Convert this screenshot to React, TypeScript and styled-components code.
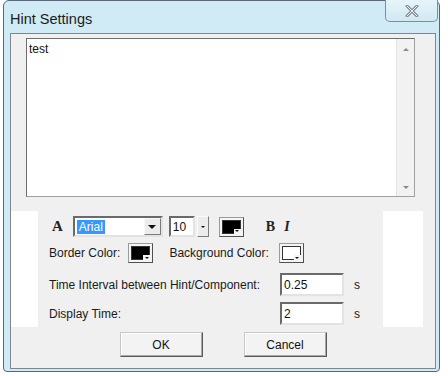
import styled, { createGlobalStyle } from 'styled-components';

const GlobalStyle = createGlobalStyle`
  body {
    margin: 0;
    background: #ffffff;
    font-family: "Liberation Sans", Arial, sans-serif;
  }
`;

const Window = styled.div`
  margin-left: 3px;
  width: 437px;
  height: 372px;
  box-sizing: border-box;
  border: 1px solid #56687a;
  border-radius: 6px 6px 4px 4px;
  background: #d0ebf6;
  display: flex;
  flex-direction: column;
`;

const TitleBar = styled.div`
  height: 32px;
  display: flex;
  align-items: flex-start;
  padding: 0 1px 0 6px;
`;

const Title = styled.div`
  font-size: 14.5px;
  line-height: 16px;
  margin-top: 10px;
  color: #1b1b1b;
`;

const CloseButton = styled.div`
  margin-left: auto;
  margin-top: -1px;
  width: 53px;
  height: 22px;
  box-sizing: border-box;
  border: 1px solid #7b8e9c;
  border-top: none;
  border-radius: 0 0 5px 5px;
  background: linear-gradient(#e6f4fa, #d2e8f2);
  display: flex;
  align-items: center;
  justify-content: center;
`;

const Client = styled.div`
  margin: 0 3px 2px 6px;
  width: 426px;
  height: 336px;
  box-sizing: border-box;
  border: 1px solid #7c878f;
  background: #f0f0f0;
  display: flex;
  flex-direction: column;
`;

const TextBox = styled.div`
  margin: 4px 0 0 15px;
  width: 389px;
  height: 159px;
  box-sizing: border-box;
  border: 1px solid #a0a0a0;
  border-top-color: #6d6d6d;
  border-left-color: #6d6d6d;
  background: #ffffff;
  display: flex;
`;

const TextArea = styled.div`
  flex: 1;
  padding: 3px 2px;
  font-size: 12px;
  line-height: 14px;
  color: #111;
`;

const ScrollBar = styled.div`
  width: 17px;
  border-left: 1px solid #e4e4e4;
  background: #f2f2f2;
  display: flex;
  flex-direction: column;
  justify-content: space-between;
  align-items: center;
  padding: 9px 0 7px;
`;

const Arrow = styled.div<{ $down?: boolean; $size?: number; $color?: string }>`
  width: 0;
  height: 0;
  border-left: ${({ $size = 3 }) => $size}px solid transparent;
  border-right: ${({ $size = 3 }) => $size}px solid transparent;
  ${({ $down, $size = 3, $color = '#8a8a8a' }) =>
    $down
      ? `border-top: ${$size}px solid ${$color};`
      : `border-bottom: ${$size}px solid ${$color};`}
`;

const LowerArea = styled.div`
  margin-top: 14px;
  width: 412px;
  height: 116px;
  background: #ffffff;
  display: flex;
`;

const Panel = styled.div`
  margin-left: 27px;
  width: 345px;
  background: #f0f0f0;
  padding-top: 5px;
  box-sizing: border-box;
  font-size: 12px;
  color: #1a1a1a;
`;

const Row = styled.div<{ $mt?: number; $h: number }>`
  display: flex;
  align-items: center;
  height: ${({ $h }) => $h}px;
  margin-top: ${({ $mt = 0 }) => $mt}px;
`;

const Item = styled.div<{ $ml: number }>`
  margin-left: ${({ $ml }) => $ml}px;
  display: flex;
  align-items: center;
`;

const Glyph = styled.span<{ $italic?: boolean; $size?: number }>`
  font-family: "Liberation Serif", "Times New Roman", serif;
  font-weight: bold;
  font-style: ${({ $italic }) => ($italic ? 'italic' : 'normal')};
  font-size: ${({ $size = 14 }) => $size}px;
  color: #222;
  line-height: 1;
`;

const Sunken = styled.div<{ $w: number; $h: number }>`
  width: ${({ $w }) => $w}px;
  height: ${({ $h }) => $h}px;
  box-sizing: border-box;
  background: #fff;
  border: 2px solid;
  border-color: #6a6a6a #e3e3e3 #e3e3e3 #6a6a6a;
  display: flex;
  align-items: center;
  font-size: 12px;
  color: #111;
`;

const FieldText = styled.span`
  margin-left: 2px;
`;

const Selected = styled.span`
  background: #3399ff;
  color: #fff;
  padding: 0 2px;
  line-height: 14px;
  margin-left: 2px;
`;

const DropButton = styled.div<{ $w: number; $h: number; $ml?: string }>`
  width: ${({ $w }) => $w}px;
  height: ${({ $h }) => $h}px;
  box-sizing: border-box;
  margin-left: ${({ $ml = 'auto' }) => $ml};
  background: #ececec;
  border: 1px solid;
  border-color: #fafafa #7a7a7a #7a7a7a #fafafa;
  display: flex;
  align-items: center;
  justify-content: center;
`;

const Swatch = styled.div`
  width: 25px;
  height: 20px;
  box-sizing: border-box;
  border: 1px solid;
  border-color: #9a9a9a #505050 #505050 #9a9a9a;
  background: #f4f4f4;
  padding: 2px;
  display: flex;
`;

const SwatchFill = styled.div<{ $fill: string }>`
  flex: 1;
  background: ${({ $fill }) => $fill};
  border: 1px solid #333;
  position: relative;
`;

const SwatchNotch = styled.div`
  position: absolute;
  right: -1px;
  bottom: -1px;
  width: 7px;
  height: 5px;
  background: #f4f4f4;
  display: flex;
  align-items: center;
  justify-content: center;
`;

const FieldGrid = styled.div`
  display: grid;
  grid-template-columns: 221px 64px 16px;
  column-gap: 10px;
  row-gap: 6px;
  align-items: center;
  margin-top: 10px;
  padding-left: 11px;
`;

const Unit = styled.span`
  font-size: 12px;
`;

const ButtonRow = styled.div`
  display: flex;
  justify-content: center;
  gap: 41px;
  margin-top: 5px;
`;

const Button = styled.div`
  width: 83px;
  height: 25px;
  box-sizing: border-box;
  border: 1px solid;
  border-color: #c8c8c8 #5a5a5a #5a5a5a #c8c8c8;
  box-shadow: inset -1px -1px 0 #a8a8a8, inset 1px 1px 0 #ffffff;
  background: #f3f3f3;
  display: flex;
  align-items: center;
  justify-content: center;
  font-size: 12px;
  color: #111;
`;

const ColorSwatch = ({ fill }: { fill: string }) => (
  <Swatch>
    <SwatchFill $fill={fill}>
      <SwatchNotch>
        <Arrow $down $size={2} $color="#111" />
      </SwatchNotch>
    </SwatchFill>
  </Swatch>
);

export default function App() {
  return (
    <>
      <GlobalStyle />
      <Window>
        <TitleBar>
          <Title>Hint Settings</Title>
          <CloseButton>
            <svg width="14" height="12" viewBox="0 0 14 12">
              <path
                d="M2 1 L12 11 M12 1 L2 11"
                stroke="#7d8a96"
                strokeWidth="3"
                strokeLinecap="round"
                fill="none"
              />
              <path
                d="M2 1 L12 11 M12 1 L2 11"
                stroke="#f4f8fa"
                strokeWidth="1"
                strokeLinecap="round"
                fill="none"
              />
            </svg>
          </CloseButton>
        </TitleBar>
        <Client>
          <TextBox>
            <TextArea>test</TextArea>
            <ScrollBar>
              <Arrow />
              <Arrow $down />
            </ScrollBar>
          </TextBox>
          <LowerArea>
            <Panel>
              <Row $h={21}>
                <Item $ml={14}>
                  <Glyph $size={15}>A</Glyph>
                </Item>
                <Item $ml={10}>
                  <Sunken $w={90} $h={21}>
                    <Selected>Arial</Selected>
                    <DropButton $w={17} $h={17}>
                      <Arrow $down $size={4} $color="#111" />
                    </DropButton>
                  </Sunken>
                </Item>
                <Item $ml={6}>
                  <Sunken $w={26} $h={21}>
                    <FieldText>10</FieldText>
                  </Sunken>
                  <DropButton $w={12} $h={21} $ml="2px">
                    <Arrow $down $size={2} $color="#111" />
                  </DropButton>
                </Item>
                <Item $ml={10}>
                  <ColorSwatch fill="#000" />
                </Item>
                <Item $ml={22}>
                  <Glyph>B</Glyph>
                </Item>
                <Item $ml={9}>
                  <Glyph $italic>I</Glyph>
                </Item>
              </Row>
              <Row $h={20} $mt={6}>
                <Item $ml={11}>Border Color:</Item>
                <Item $ml={8}>
                  <ColorSwatch fill="#000" />
                </Item>
                <Item $ml={16}>Background Color:</Item>
                <Item $ml={10}>
                  <ColorSwatch fill="#fff" />
                </Item>
              </Row>
              <FieldGrid>
                <span>Time Interval between Hint/Component:</span>
                <Sunken $w={64} $h={23}>
                  <FieldText>0.25</FieldText>
                </Sunken>
                <Unit>s</Unit>
                <span>Display Time:</span>
                <Sunken $w={64} $h={23}>
                  <FieldText>2</FieldText>
                </Sunken>
                <Unit>s</Unit>
              </FieldGrid>
            </Panel>
          </LowerArea>
          <ButtonRow>
            <Button>OK</Button>
            <Button>Cancel</Button>
          </ButtonRow>
        </Client>
      </Window>
    </>
  );
}
